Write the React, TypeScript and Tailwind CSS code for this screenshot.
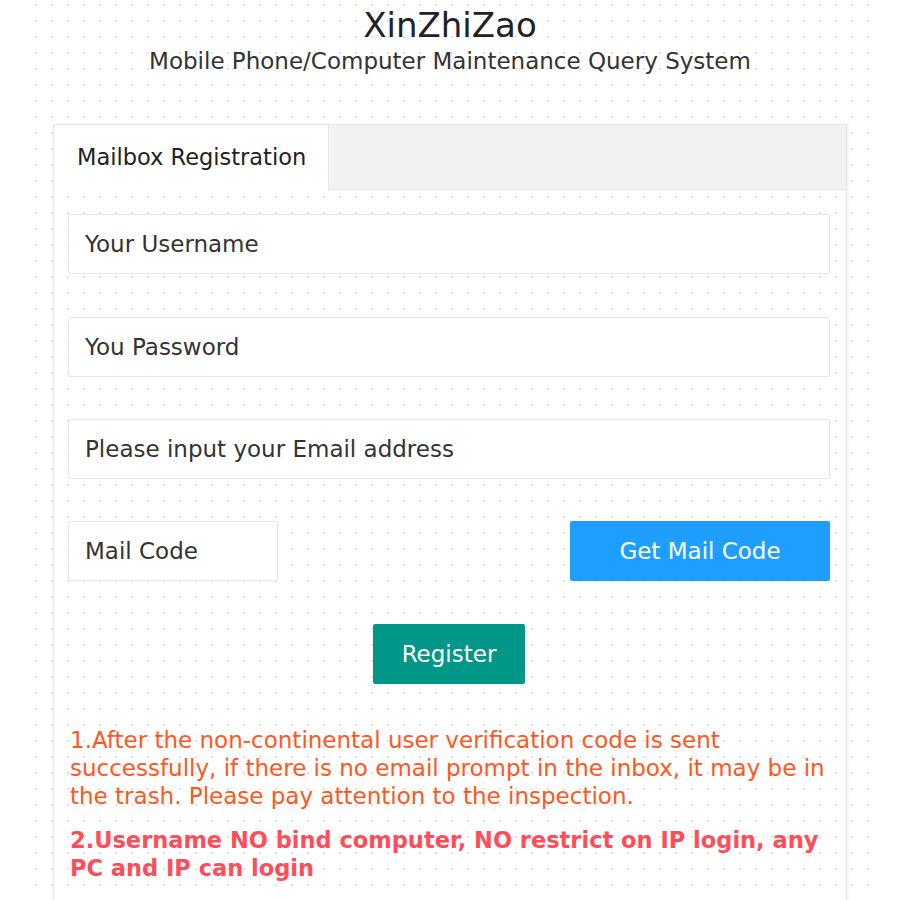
import { useState } from "react";

const FONT = "font-['DejaVu_Sans','Verdana',sans-serif]";

interface FieldProps {
  placeholder: string;
  type?: string;
  className?: string;
}

function Field({ placeholder, type = "text", className = "" }: FieldProps) {
  return (
    <input
      type={type}
      placeholder={placeholder}
      className={`h-[60px] bg-white border border-[#e6e6e6] rounded-[2px] pl-4 pr-3 text-[23px] text-[#333] placeholder:text-[#333] outline-none ${className}`}
    />
  );
}

export default function App() {
  const [tab] = useState("mail");

  return (
    <div className={`min-h-screen bg-white ${FONT}`}>
      <div className="mx-[30px] min-h-screen bg-[radial-gradient(#e0e0e0_1px,transparent_1.3px)] bg-size-[16px_16px] bg-position-[-2px_-3px] pt-[5px]">
        {/* Header */}
        <h1 className="text-center text-[34px] leading-[40px] font-normal text-[#222]">XinZhiZao</h1>
        <p className="text-center text-[23px] leading-[28px] text-[#333] mt-[2px]">
          Mobile Phone/Computer Maintenance Query System
        </p>

        {/* Card */}
        <div className="mx-[23px] mt-[49px] border border-[#e6e6e6] shadow-[1px_1px_3px_rgba(0,0,0,0.08)] pb-10">
          <div className="flex h-[65px] bg-[#f2f2f2] border-b border-[#e6e6e6]">
            <div
              className={`flex items-center pl-[23px] pr-[22px] text-[22.5px] text-[#222] ${
                tab === "mail" ? "bg-white border-r border-[#e6e6e6] h-[66px]" : ""
              }`}
            >
              Mailbox Registration
            </div>
          </div>

          <div className="px-[14px] pr-[16px] pt-[24px] flex flex-col">
            <Field placeholder="Your Username" />
            <Field placeholder="You Password" type="password" className="mt-[43px]" />
            <Field placeholder="Please input your Email address" className="mt-[42px]" />

            <div className="mt-[42px] flex items-center justify-between">
              <Field placeholder="Mail Code" className="w-[210px]" />
              <button className="w-[260px] h-[60px] rounded-[2px] bg-[#1e9fff] text-white text-[23px]">
                Get Mail Code
              </button>
            </div>

            <div className="mt-[43px] flex justify-center">
              <button className="w-[152px] h-[60px] rounded-[2px] bg-[#009688] text-white text-[23px]">
                Register
              </button>
            </div>

            <div className="mt-[42px] pl-[2px] leading-[28px] whitespace-nowrap">
              <p className="text-[23px] text-[#ff5722]">
                1.After the non-continental user verification code is sent
                <br />
                successfully, if there is no email prompt in the inbox, it may be in
                <br />
                the trash. Please pay attention to the inspection.
              </p>
              <p className="mt-[16px] text-[22.5px] font-bold text-[#ff4d5a]">
                2.Username NO bind computer, NO restrict on IP login, any
                <br />
                PC and IP can login
              </p>
            </div>
          </div>
        </div>
      </div>
    </div>
  );
}
